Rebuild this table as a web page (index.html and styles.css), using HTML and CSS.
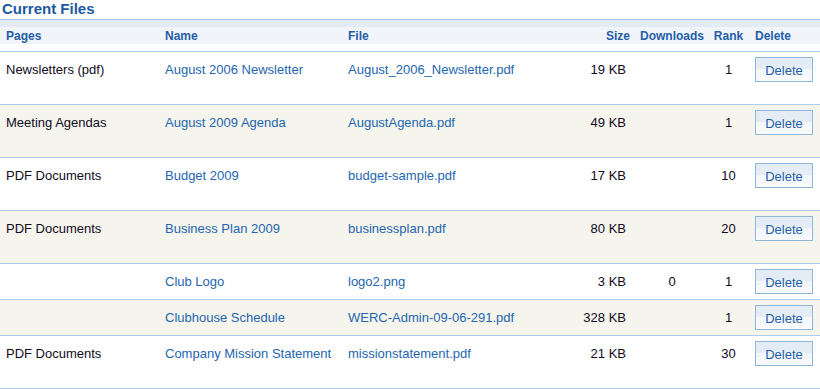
FILE: index.html
```html
<!DOCTYPE html>
<html>
<head>
<meta charset="utf-8">
<title>Current Files</title>
<link rel="stylesheet" href="styles.css">
</head>
<body>
<h2 class="title">Current Files</h2>
<table class="files">
  <colgroup>
    <col class="c-pages"><col class="c-name"><col class="c-file"><col class="c-size"><col class="c-dl"><col class="c-rank"><col class="c-del">
  </colgroup>
  <thead>
    <tr>
      <th>Pages</th><th>Name</th><th>File</th><th class="num">Size</th><th class="mid">Downloads</th><th class="mid">Rank</th><th>Delete</th>
    </tr>
  </thead>
  <tbody>
    <tr class="tall">
      <td>Newsletters (pdf)</td><td><a href="#">August 2006 Newsletter</a></td><td><a href="#">August_2006_Newsletter.pdf</a></td><td class="num">19 KB</td><td class="mid"></td><td class="mid">1</td><td class="del"><button class="btn">Delete</button></td>
    </tr>
    <tr class="tall alt">
      <td>Meeting Agendas</td><td><a href="#">August 2009 Agenda</a></td><td><a href="#">AugustAgenda.pdf</a></td><td class="num">49 KB</td><td class="mid"></td><td class="mid">1</td><td class="del"><button class="btn">Delete</button></td>
    </tr>
    <tr class="tall">
      <td>PDF Documents</td><td><a href="#">Budget 2009</a></td><td><a href="#">budget-sample.pdf</a></td><td class="num">17 KB</td><td class="mid"></td><td class="mid">10</td><td class="del"><button class="btn">Delete</button></td>
    </tr>
    <tr class="tall alt">
      <td>PDF Documents</td><td><a href="#">Business Plan 2009</a></td><td><a href="#">businessplan.pdf</a></td><td class="num">80 KB</td><td class="mid"></td><td class="mid">20</td><td class="del"><button class="btn">Delete</button></td>
    </tr>
    <tr>
      <td></td><td><a href="#">Club Logo</a></td><td><a href="#">logo2.png</a></td><td class="num">3 KB</td><td class="mid">0</td><td class="mid">1</td><td class="del"><button class="btn">Delete</button></td>
    </tr>
    <tr class="alt">
      <td></td><td><a href="#">Clubhouse Schedule</a></td><td><a href="#">WERC-Admin-09-06-291.pdf</a></td><td class="num">328 KB</td><td class="mid"></td><td class="mid">1</td><td class="del"><button class="btn">Delete</button></td>
    </tr>
    <tr class="tall">
      <td>PDF Documents</td><td><a href="#">Company Mission Statement</a></td><td><a href="#">missionstatement.pdf</a></td><td class="num">21 KB</td><td class="mid"></td><td class="mid">30</td><td class="del"><button class="btn">Delete</button></td>
    </tr>
  </tbody>
</table>
</body>
</html>
```
FILE: styles.css
```css
body {
  margin: 0;
  background: #fff;
  font-family: "Liberation Sans", Arial, sans-serif;
  font-size: 13px;
  color: #110a22;
}
.title {
  margin: 0;
  height: 19px;
  padding-left: 2px;
  font-size: 15px;
  line-height: 17px;
  font-weight: bold;
  color: #1b59a0;
}
.files {
  width: 820px;
  table-layout: fixed;
  border-collapse: separate;
  border-spacing: 0;
}
.c-pages { width: 159px; }
.c-name { width: 183px; }
.c-file { width: 238px; }
.c-size { width: 56px; }
.c-dl { width: 72px; }
.c-rank { width: 41px; }
.c-del { width: 71px; }

.files th {
  border-top: 1px solid #9ec3e4;
  border-bottom: 1px solid #a9cdea;
  padding: 9px 0 7px 6px;
  height: 15px;
  line-height: 15px;
  font-size: 12px;
  font-weight: bold;
  color: #1f5ea8;
  text-align: left;
  white-space: nowrap;
  background: linear-gradient(#e3ebf5 0, #e3ebf5 7px, #f1f5fa 7px, #f1f5fa 24px, #fff 24px);
}
.files td {
  border-bottom: 1px solid #a9cdea;
  padding: 10px 0 0 6px;
  line-height: 15px;
  vertical-align: top;
  white-space: nowrap;
}
.files td.del {
  padding: 5px 0 5px 6px;
}
.files tr.tall td.del {
  padding-bottom: 22px;
}
.files tr.alt td {
  background: #f5f4ed;
}
.files th.num { text-align: right; padding: 9px 6px 7px 0; }
.files td.num { text-align: right; padding-right: 10px; padding-left: 0; }
.files .mid { text-align: center; padding-left: 0; }
.files th.mid { padding-left: 0; }

.files a {
  color: #2466b1;
  text-decoration: none;
}
.btn {
  display: block;
  box-sizing: border-box;
  width: 58px;
  height: 25px;
  margin: 0;
  padding: 3px 0 0;
  border: 1px solid #8fb6d9;
  background: linear-gradient(#e4ecf5 0, #e4ecf5 11px, #f3f7fb 11px, #f8fafd 100%);
  font-family: "Liberation Sans", Arial, sans-serif;
  font-size: 13px;
  color: #1f5ea8;
  text-align: center;
  line-height: 20px;
}
```
